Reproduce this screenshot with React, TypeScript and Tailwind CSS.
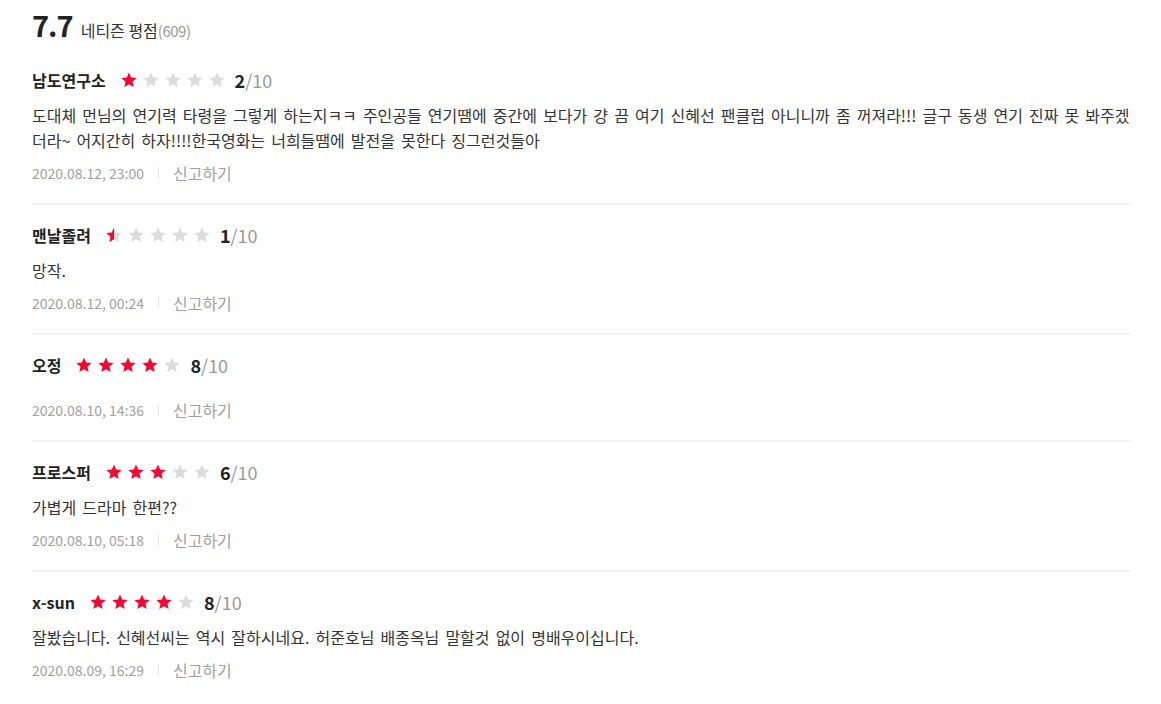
type Review = {
  name: string;
  score: number;
  text: string;
  date: string;
};

const reviews: Review[] = [
  {
    name: "남도연구소",
    score: 2,
    text: "도대체 먼님의 연기력 타령을 그렇게 하는지ㅋㅋ 주인공들 연기땜에 중간에 보다가 걍 끔 여기 신혜선 팬클럽 아니니까 좀 꺼져라!!! 글구 동생 연기 진짜 못 봐주겠더라~ 어지간히 하자!!!!한국영화는 너희들땜에 발전을 못한다 징그런것들아",
    date: "2020.08.12, 23:00",
  },
  { name: "맨날졸려", score: 1, text: "망작.", date: "2020.08.12, 00:24" },
  { name: "오정", score: 8, text: "", date: "2020.08.10, 14:36" },
  { name: "프로스퍼", score: 6, text: "가볍게 드라마 한편??", date: "2020.08.10, 05:18" },
  {
    name: "x-sun",
    score: 8,
    text: "잘봤습니다. 신혜선씨는 역시 잘하시네요. 허준호님 배종옥님 말할것 없이 명배우이십니다.",
    date: "2020.08.09, 16:29",
  },
];

const STAR_PATH =
  "M8 0.6l2.2 5 5.4 0.5-4.1 3.6 1.2 5.3L8 12.2 3.3 15l1.2-5.3L0.4 6.1l5.4-0.5z";

function Star({ fill }: { fill: "full" | "half" | "empty" }) {
  return (
    <svg width="16" height="16" viewBox="0 0 16 16" className="block">
      <defs>
        <clipPath id="half-left">
          <rect x="0" y="0" width="8" height="16" />
        </clipPath>
      </defs>
      <path d={STAR_PATH} fill={fill === "full" ? "#f5072f" : "#dcdcdc"} />
      {fill === "half" && (
        <path d={STAR_PATH} fill="#f5072f" clipPath="url(#half-left)" />
      )}
    </svg>
  );
}

function Stars({ score }: { score: number }) {
  const stars = [0, 1, 2, 3, 4].map((i) => {
    const value = score - i * 2;
    if (value >= 2) return "full" as const;
    if (value === 1) return "half" as const;
    return "empty" as const;
  });

  return (
    <div className="flex items-center gap-[6px]">
      {stars.map((fill, i) => (
        <Star key={i} fill={fill} />
      ))}
    </div>
  );
}

function ReviewItem({ review, last }: { review: Review; last: boolean }) {
  return (
    <li
      className={`pt-[17px] pb-[20px] ${
        last ? "" : "border-b-2 border-[#f2f2f2]"
      }`}
    >
      <div className="flex h-[26px] items-center">
        <span className="text-[16px] font-bold leading-[26px] text-[#222]">
          {review.name}
        </span>
        <div className="ml-[15px]">
          <Stars score={review.score} />
        </div>
        <span className="ml-[10px] text-[18px] leading-[26px] text-[#999]">
          <b className="font-bold text-[#222]">{review.score}</b>/10
        </span>
      </div>

      {review.text ? (
        <p className="mt-[10px] text-[16px] leading-[25px] text-[#333] [word-spacing:2.5px]">
          {review.text}
        </p>
      ) : (
        <div className="mt-[10px] h-[2px]" />
      )}

      <div className="mt-[10px] flex h-[20px] items-center text-[14px] leading-[20px] text-[#a0a0a0]">
        <span>{review.date}</span>
        <span className="mx-[14px] h-[12px] w-px bg-[#e5e5e5]" />
        <button type="button" className="text-[16px] text-[#a0a0a0]">
          신고하기
        </button>
      </div>
    </li>
  );
}

export default function App() {
  return (
    <main
      className="min-h-screen bg-white pl-[32px] pr-[30px]"
      style={{ fontFamily: '"Noto Sans CJK KR", "Noto Sans", sans-serif' }}
    >
      <header className="flex h-[50px] items-baseline pt-[5px]">
        <strong className="text-[29px] font-bold leading-[38px] tracking-[-1px] text-[#222]">
          7.7
        </strong>
        <span className="ml-[8px] text-[16px] text-[#333]">네티즌 평점</span>
        <span className="text-[15px] tracking-[-0.5px] text-[#999]">(609)</span>
      </header>

      <ul>
        {reviews.map((review, i) => (
          <ReviewItem
            key={review.date}
            review={review}
            last={i === reviews.length - 1}
          />
        ))}
      </ul>
    </main>
  );
}
